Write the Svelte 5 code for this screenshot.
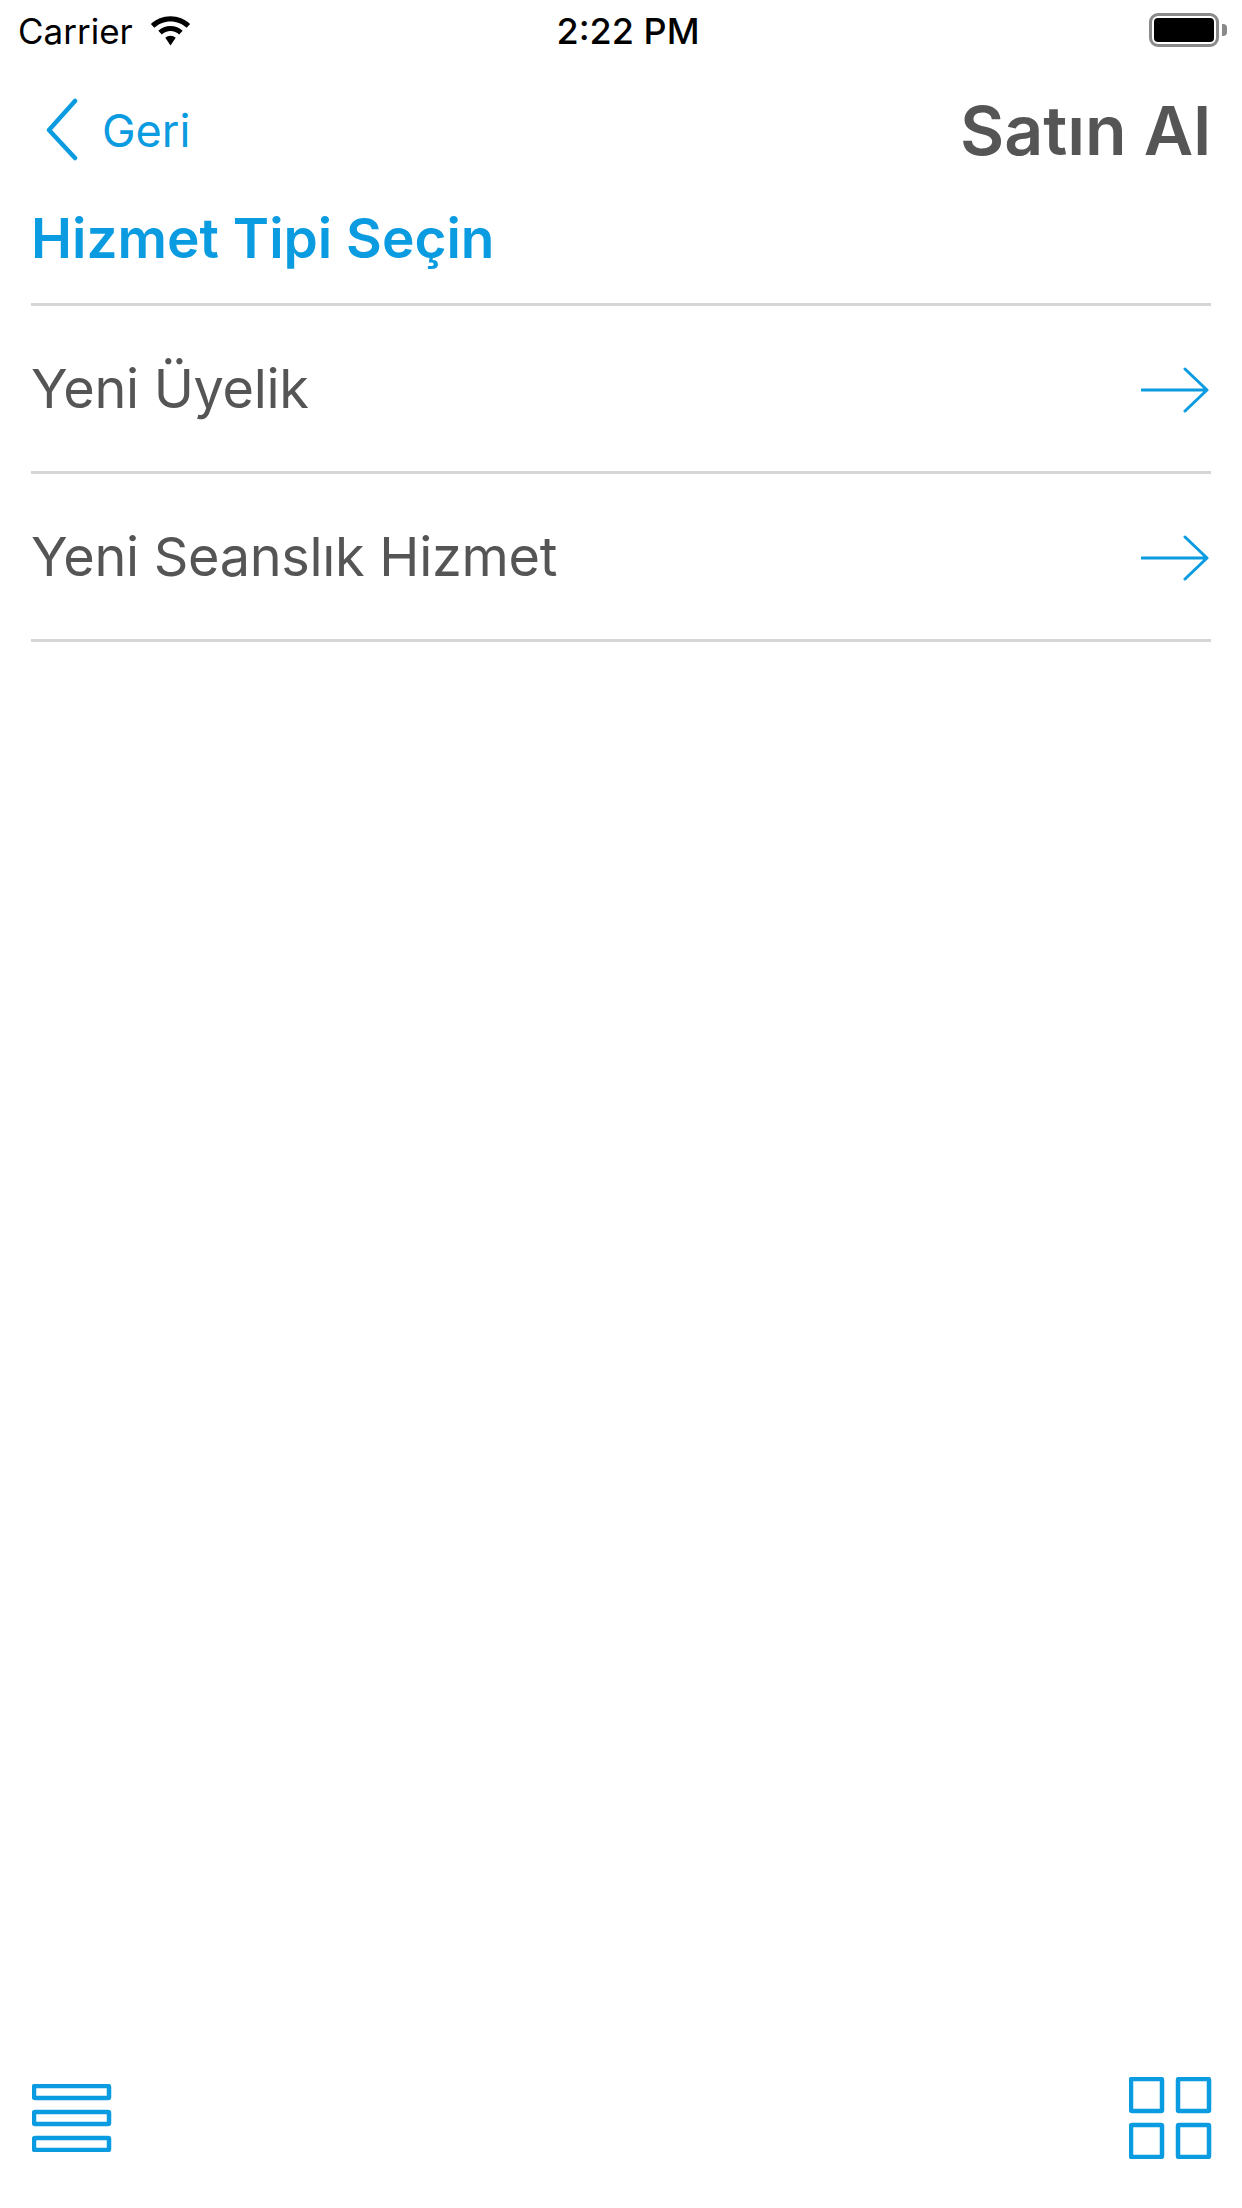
<script>
  const services = ['Yeni Üyelik', 'Yeni Seanslık Hizmet'];
</script>

<div class="screen">
  <div class="status-bar">
    <div class="status-left">
      <span class="carrier">Carrier</span>
      <svg class="wifi" width="41" height="30" viewBox="0 0 37 27">
        <path d="M18.5 0.2C11.6 0.2 5.4 2.9 0.8 7.2L3.9 10.6C7.7 7 12.8 4.9 18.5 4.9S29.3 7 33.1 10.6L36.2 7.2C31.6 2.9 25.4 0.2 18.5 0.2Z" fill="#000" />
        <path d="M18.5 9C14.2 9 10.4 10.6 7.5 13.3L10.7 16.6C12.7 14.8 15.5 13.6 18.5 13.6S24.3 14.8 26.3 16.6L29.5 13.3C26.6 10.6 22.8 9 18.5 9Z" fill="#000" />
        <path d="M18.5 17.8C16.7 17.8 15 18.5 13.8 19.7L18.5 26.6L23.2 19.7C22 18.5 20.3 17.8 18.5 17.8Z" fill="#000" />
      </svg>
    </div>
    <span class="time">2:22 PM</span>
    <div class="battery">
      <div class="battery-body"><div class="battery-level"></div></div>
      <div class="battery-nub"></div>
    </div>
  </div>

  <div class="nav">
    <div class="back">
      <svg width="32" height="64" viewBox="0 0 32 64">
        <path d="M29 3L3 32L29 60" fill="none" stroke="#0a9be0" stroke-width="4.5" stroke-linecap="round" stroke-linejoin="round" />
      </svg>
      <span>Geri</span>
    </div>
    <h1>Satın Al</h1>
  </div>

  <h2>Hizmet Tipi Seçin</h2>

  <ul class="list">
    {#each services as service}
      <li>
        <span>{service}</span>
        <svg class="arrow" width="68" height="46" viewBox="0 0 68 46">
          <path d="M1 23H66M44 2L66 23L44 44" fill="none" stroke="#0a9be0" stroke-width="3" stroke-linecap="round" stroke-linejoin="round" />
        </svg>
      </li>
    {/each}
  </ul>

  <div class="bottom-bar">
    <svg width="80" height="68" viewBox="0 0 80 68">
      <g fill="none" stroke="#0a9be0" stroke-width="4.5" stroke-linejoin="round">
        <rect x="2" y="2" width="75" height="12" rx="1" />
        <rect x="2" y="28" width="75" height="12" rx="1" />
        <rect x="2" y="54" width="75" height="12" rx="1" />
      </g>
    </svg>
    <svg width="84" height="82" viewBox="0 0 84 82">
      <g fill="none" stroke="#0a9be0" stroke-width="4.5" stroke-linejoin="round">
        <rect x="2" y="2" width="31" height="32" rx="1" />
        <rect x="49" y="2" width="31" height="32" rx="1" />
        <rect x="2" y="48" width="31" height="32" rx="1" />
        <rect x="49" y="48" width="31" height="32" rx="1" />
      </g>
    </svg>
  </div>
</div>

<style>
  :global(body) {
    margin: 0;
    background: #fff;
  }

  .screen {
    display: flex;
    flex-direction: column;
    height: 2208px;
    box-sizing: border-box;
    font-family: Inter, 'Liberation Sans', sans-serif;
  }

  .status-bar {
    position: relative;
    display: flex;
    justify-content: space-between;
    align-items: center;
    height: 62px;
    padding: 0 15px 0 18px;
  }

  .status-left {
    display: flex;
    align-items: center;
    gap: 17px;
  }

  .carrier {
    font-size: 35px;
    color: #000;
  }

  .time {
    position: absolute;
    left: 14px;
    right: 0;
    text-align: center;
    font-size: 36px;
    font-weight: 500;
    color: #000;
    pointer-events: none;
  }

  .battery {
    display: flex;
    align-items: center;
    gap: 3px;
    margin-bottom: 2px;
  }

  .battery-body {
    box-sizing: border-box;
    width: 70px;
    height: 34px;
    padding: 2px;
    border: 3px solid #8a8a8a;
    border-radius: 9px;
  }

  .battery-level {
    height: 100%;
    background: #000;
    border-radius: 4px;
  }

  .battery-nub {
    width: 5px;
    height: 12px;
    background: #8a8a8a;
    border-radius: 0 4px 4px 0;
  }

  .nav {
    display: flex;
    justify-content: space-between;
    align-items: center;
    height: 84px;
    margin-top: 26px;
    padding: 0 31px 0 46px;
  }

  .back {
    display: flex;
    align-items: center;
    gap: 24px;
    font-size: 45px;
    color: #0a9be0;
  }

  h1 {
    margin: 0;
    font-size: 68px;
    font-weight: 600;
    color: #555;
  }

  h2 {
    margin: 20px 0 19px;
    padding: 0 31px;
    height: 92px;
    line-height: 92px;
    font-size: 55px;
    font-weight: 600;
    color: #0a9be0;
  }

  .list {
    margin: 0 31px;
    padding: 0;
    list-style: none;
    border-top: 3px solid #d6d6d6;
  }

  li {
    display: flex;
    justify-content: space-between;
    align-items: center;
    box-sizing: border-box;
    height: 168px;
    border-bottom: 3px solid #d6d6d6;
    font-size: 54px;
    letter-spacing: -0.3px;
    color: #555;
  }

  .arrow {
    margin: 3px 2px 0 0;
  }

  .bottom-bar {
    display: flex;
    justify-content: space-between;
    align-items: center;
    margin-top: auto;
    padding: 0 29px 49px 32px;
  }
</style>
